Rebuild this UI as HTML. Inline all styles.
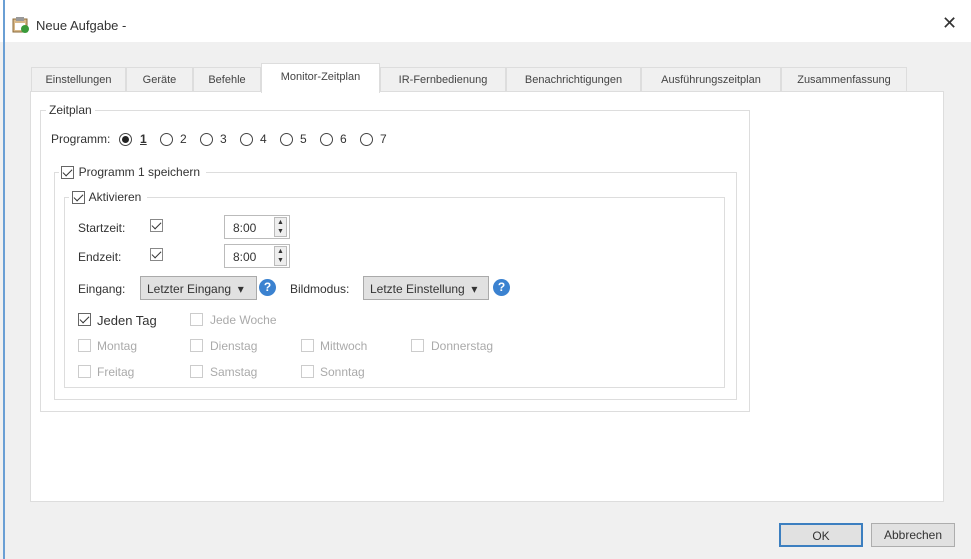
<!DOCTYPE html>
<html><head><meta charset="utf-8"><style>
*{box-sizing:border-box;margin:0;padding:0}
body{width:971px;height:559px;background:#f0f0f0;font-family:"Liberation Sans",sans-serif;font-size:12px;color:#333;position:relative;overflow:hidden}
.a{position:absolute}
.title{left:0;top:0;width:971px;height:42px;background:#fff}
.tab{top:67px;height:25px;background:#f0f0f0;border:1px solid #ddd;border-bottom:none;text-align:center;line-height:24px;color:#444;font-size:11px}
.sel{top:63px;height:30px;background:#fff;z-index:2;line-height:26px}
.panel{left:30px;top:91px;width:914px;height:411px;background:#fff;border:1px solid #ddd}
.grp{border:1px solid #ddd}
.lbl{background:#fff;padding:0 3px}
.cb{width:13px;height:13px;border:1px solid #666;background:#fff}
.cb.on::after{content:"";position:absolute;left:3px;top:0px;width:4px;height:8px;border:solid #333;border-width:0 1.5px 1.5px 0;transform:rotate(45deg)}
.cb.dis{border-color:#ccc}
.dis{color:#aaa}
.rad{width:13px;height:13px;border:1px solid #444;border-radius:50%;background:#fff}
.spin{width:66px;height:24px;border:1px solid #bbb;background:#fff;padding:5px 0 0 8px}
.dd{height:24px;border:1px solid #aaa;background:#e1e1e1;padding:5px 0 0 6px}
.q{width:17px;height:17px;border-radius:50%;background:#3b82d0;color:#fff;font-weight:bold;text-align:center;line-height:17px;font-size:12px}
.btn{height:24px;border:1px solid #adadad;background:#e1e1e1;text-align:center;line-height:22px}
</style></head><body>
<div class="a" style="left:3px;top:0;width:2px;height:559px;background:#6a9fd4;z-index:5"></div>
<div class="a title"></div>
<svg class="a" style="left:12px;top:17px" width="18" height="17"><rect x="1" y="2" width="14" height="13" fill="#d9b98a" stroke="#8a6a3a"/><rect x="4" y="0" width="8" height="4" fill="#999"/><rect x="3" y="6" width="10" height="7" fill="#fff"/><circle cx="13" cy="12" r="4" fill="#3a9a3a"/></svg>
<div class="a" style="left:36px;top:18px;font-size:13px">Neue Aufgabe -</div>
<div class="a" style="left:942px;top:13px;font-size:18px;color:#333">✕</div>

<div class="a tab" style="left:31px;width:95px">Einstellungen</div>
<div class="a tab" style="left:126px;width:67px">Geräte</div>
<div class="a tab" style="left:193px;width:68px">Befehle</div>
<div class="a tab" style="left:380px;width:126px">IR-Fernbedienung</div>
<div class="a tab" style="left:506px;width:135px">Benachrichtigungen</div>
<div class="a tab" style="left:641px;width:140px">Ausführungszeitplan</div>
<div class="a tab" style="left:781px;width:126px">Zusammenfassung</div>
<div class="a panel"></div>
<div class="a tab sel" style="left:261px;width:119px;border-color:#ddd">Monitor-Zeitplan</div>

<div class="a grp" style="left:40px;top:110px;width:710px;height:302px"></div>
<div class="a lbl" style="left:46px;top:103px">Zeitplan</div>
<div class="a" style="left:51px;top:132px">Programm:</div>
<div class="a rad" style="left:119px;top:133px"></div><div class="a" style="left:122px;top:136px;width:7px;height:7px;border-radius:50%;background:#222"></div>
<div class="a" style="left:140px;top:132px;text-decoration:underline;font-weight:bold">1</div>
<div class="a rad" style="left:160px;top:133px"></div><div class="a" style="left:180px;top:132px">2</div>
<div class="a rad" style="left:200px;top:133px"></div><div class="a" style="left:220px;top:132px">3</div>
<div class="a rad" style="left:240px;top:133px"></div><div class="a" style="left:260px;top:132px">4</div>
<div class="a rad" style="left:280px;top:133px"></div><div class="a" style="left:300px;top:132px">5</div>
<div class="a rad" style="left:320px;top:133px"></div><div class="a" style="left:340px;top:132px">6</div>
<div class="a rad" style="left:360px;top:133px"></div><div class="a" style="left:380px;top:132px">7</div>

<div class="a grp" style="left:54px;top:172px;width:683px;height:228px"></div>
<div class="a lbl" style="left:59px;top:165px;padding-left:3px;padding-right:6px">&nbsp;&nbsp;&nbsp;&nbsp;&nbsp;Programm 1 speichern</div>
<div class="a cb on" style="left:61px;top:166px"></div>

<div class="a grp" style="left:64px;top:197px;width:661px;height:191px"></div>
<div class="a lbl" style="left:69px;top:190px;padding-right:6px">&nbsp;&nbsp;&nbsp;&nbsp;&nbsp;Aktivieren</div>
<div class="a cb on" style="left:72px;top:191px"></div>

<div class="a" style="left:78px;top:221px">Startzeit:</div>
<div class="a cb on" style="left:150px;top:219px;border-color:#888"></div>
<div class="a spin" style="left:224px;top:215px">8:00</div>
<div class="a" style="left:274px;top:217px;width:13px;height:20px;border:1px solid #bbb;background:#eee;font-size:7px;line-height:9px;text-align:center">▲<br>▼</div>
<div class="a" style="left:78px;top:250px">Endzeit:</div>
<div class="a cb on" style="left:150px;top:248px;border-color:#888"></div>
<div class="a spin" style="left:224px;top:244px">8:00</div>
<div class="a" style="left:274px;top:246px;width:13px;height:20px;border:1px solid #bbb;background:#eee;font-size:7px;line-height:9px;text-align:center">▲<br>▼</div>

<div class="a" style="left:78px;top:282px">Eingang:</div>
<div class="a dd" style="left:140px;top:276px;width:117px">Letzter Eingang&nbsp; ▾</div>
<div class="a q" style="left:259px;top:279px">?</div>
<div class="a" style="left:290px;top:282px">Bildmodus:</div>
<div class="a dd" style="left:363px;top:276px;width:126px">Letzte Einstellung&nbsp; ▾</div>
<div class="a q" style="left:493px;top:279px">?</div>

<div class="a cb on" style="left:78px;top:313px"></div><div class="a" style="left:97px;top:313px;font-size:13px">Jeden Tag</div>
<div class="a cb dis" style="left:190px;top:313px"></div><div class="a dis" style="left:210px;top:313px">Jede Woche</div>
<div class="a cb dis" style="left:78px;top:339px"></div><div class="a dis" style="left:97px;top:339px">Montag</div>
<div class="a cb dis" style="left:190px;top:339px"></div><div class="a dis" style="left:210px;top:339px">Dienstag</div>
<div class="a cb dis" style="left:301px;top:339px"></div><div class="a dis" style="left:320px;top:339px">Mittwoch</div>
<div class="a cb dis" style="left:411px;top:339px"></div><div class="a dis" style="left:431px;top:339px">Donnerstag</div>
<div class="a cb dis" style="left:78px;top:365px"></div><div class="a dis" style="left:97px;top:365px">Freitag</div>
<div class="a cb dis" style="left:190px;top:365px"></div><div class="a dis" style="left:210px;top:365px">Samstag</div>
<div class="a cb dis" style="left:301px;top:365px"></div><div class="a dis" style="left:320px;top:365px">Sonntag</div>

<div class="a btn" style="left:779px;top:523px;width:84px;border:2px solid #3c7fc0">OK</div>
<div class="a btn" style="left:871px;top:523px;width:84px">Abbrechen</div>
</body></html>
